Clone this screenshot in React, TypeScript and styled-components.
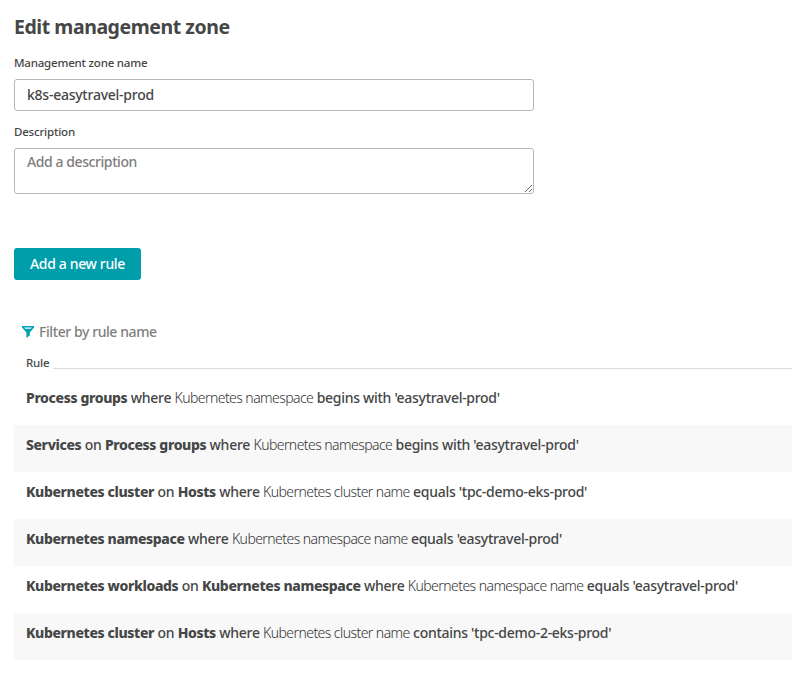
import React from "react";
import styled, { createGlobalStyle } from "styled-components";

const GlobalStyle = createGlobalStyle`
  *, *::before, *::after { box-sizing: border-box; }
  html { background: #fff; overflow: hidden; }
  body {
    margin: 0;
    color: #454646;
    font-family: "Noto Sans", "Open Sans", sans-serif;
    font-size: 14px;
    font-weight: 500;
    overflow: hidden;
  }
`;

const Page = styled.main`
  display: flex;
  flex-direction: column;
  align-items: flex-start;
  width: 100%;
  height: 680px;
  padding: 13px 0 0 14px;
`;

const Title = styled.h1`
  margin: 0 0 14px;
  font-size: 19.5px;
  line-height: 28px;
  font-weight: 700;
  letter-spacing: -0.45px;
`;

const Label = styled.label`
  font-size: 11.5px;
  line-height: 16px;
  letter-spacing: -0.2px;
  margin-bottom: 8px;
`;

const Input = styled.input`
  display: block;
  width: 520px;
  height: 32px;
  margin: 0 0 13px;
  padding: 0 12px 2px;
  border: 1px solid #b7b7b7;
  border-radius: 3px;
  background: #fff;
  color: #454646;
  font: inherit;
  letter-spacing: -0.25px;
  outline: none;
`;

const TextArea = styled.textarea`
  display: block;
  width: 520px;
  height: 46px;
  margin: 0 0 54px;
  padding: 3px 12px;
  border: 1px solid #b7b7b7;
  border-radius: 3px;
  background: #fff;
  font: inherit;
  line-height: 20px;
  letter-spacing: -0.42px;
  resize: both;
  overflow: hidden;
  outline: none;
  &::placeholder { color: #7d7d7d; opacity: 1; }
`;

const Button = styled.button`
  width: 127px;
  height: 32px;
  margin: 0 0 40px;
  padding: 0 0 1px;
  border: 0;
  border-radius: 3px;
  background: #009dab;
  color: #fff;
  font: inherit;
  letter-spacing: -0.35px;
  white-space: nowrap;
`;

const Filter = styled.div`
  display: flex;
  align-items: center;
  gap: 5px;
  height: 24px;
  padding-left: 8px;
  color: #808080;
  line-height: 20px;
  letter-spacing: -0.42px;
`;

const TableHead = styled.div`
  display: flex;
  align-items: flex-end;
  gap: 4px;
  width: 100%;
  height: 25px;
  padding-left: 12px;
  font-size: 11.5px;
  line-height: 12px;
  margin-bottom: 9px;
  letter-spacing: -0.2px;
`;

const HeadLine = styled.span`
  flex: 1;
  height: 1px;
  background: #dcdcdc;
`;

const Rules = styled.ul`
  list-style: none;
  width: 100%;
  margin: 0;
  padding: 0;
`;

const Rule = styled.li`
  height: 47px;
  padding: 10px 0 0 12px;
  line-height: 20px;
  white-space: pre;
  &:nth-child(even) { background: #f8f8f8; }
`;

const Entity = styled.strong`
  font-weight: 800;
  letter-spacing: -0.38px;
`;

const Word = styled.span`
  letter-spacing: -0.26px;
`;

const Attribute = styled.span`
  color: #333;
  font-weight: 300;
  letter-spacing: -0.56px;
`;

const Condition = styled.span`
  letter-spacing: -0.29px;
`;

type RuleData = { entity: string; on?: string; attribute: string; condition: string };

const rules: RuleData[] = [
  { entity: "Process groups", attribute: "Kubernetes namespace", condition: "begins with 'easytravel-prod'" },
  { entity: "Services", on: "Process groups", attribute: "Kubernetes namespace", condition: "begins with 'easytravel-prod'" },
  { entity: "Kubernetes cluster", on: "Hosts", attribute: "Kubernetes cluster name", condition: "equals 'tpc-demo-eks-prod'" },
  { entity: "Kubernetes namespace", attribute: "Kubernetes namespace name", condition: "equals 'easytravel-prod'" },
  { entity: "Kubernetes workloads", on: "Kubernetes namespace", attribute: "Kubernetes namespace name", condition: "equals 'easytravel-prod'" },
  { entity: "Kubernetes cluster", on: "Hosts", attribute: "Kubernetes cluster name", condition: "contains 'tpc-demo-2-eks-prod'" },
];

function FilterIcon() {
  return (
    <svg width="12" height="12" viewBox="0 0 12 12" aria-hidden="true">
      <path fill="#00a1b2" fillRule="evenodd" d="M0 0h12v1.6L7.8 6.6v2.8L4.4 12V6.6L0 1.6zM2.1 1.4l1.3 1.4h5.2l1.3-1.4z" />
    </svg>
  );
}

export default function App() {
  return (
    <>
      <GlobalStyle />
      <Page>
        <Title>Edit management zone</Title>
        <Label htmlFor="zone-name">Management zone name</Label>
        <Input id="zone-name" defaultValue="k8s-easytravel-prod" />
        <Label htmlFor="zone-description">Description</Label>
        <TextArea id="zone-description" placeholder="Add a description" />
        <Button type="button">Add a new rule</Button>
        <Filter>
          <FilterIcon />
          <span>Filter by rule name</span>
        </Filter>
        <TableHead>
          <span>Rule</span>
          <HeadLine />
        </TableHead>
        <Rules>
          {rules.map((rule, i) => (
            <Rule key={i}>
              <Entity>{rule.entity}</Entity>
              {rule.on && <><Word> on </Word><Entity>{rule.on}</Entity></>}
              <Word> where </Word>
              <Attribute>{rule.attribute}</Attribute>
              <Condition> {rule.condition}</Condition>
            </Rule>
          ))}
        </Rules>
      </Page>
    </>
  );
}
